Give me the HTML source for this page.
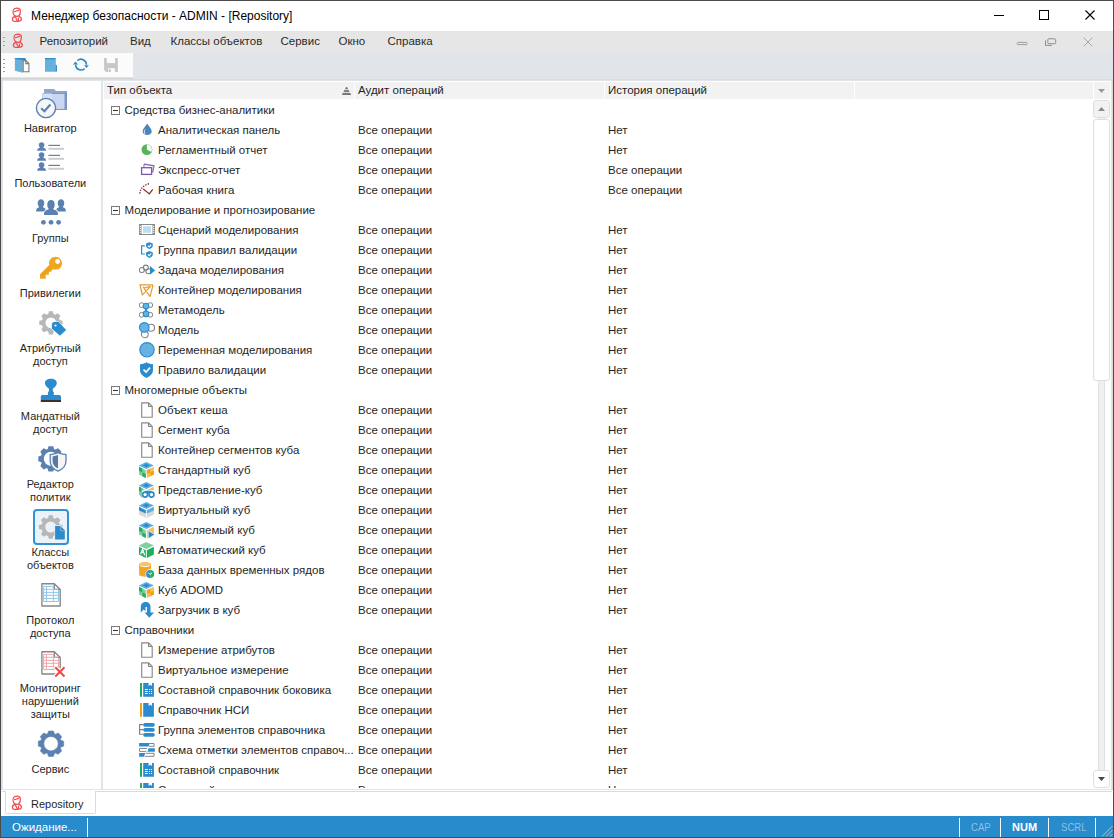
<!DOCTYPE html>
<html><head><meta charset="utf-8"><title>Менеджер безопасности</title><style>
*{margin:0;padding:0;box-sizing:border-box}
html,body{width:1114px;height:838px;overflow:hidden;background:#fff}
body{position:relative;font-family:"Liberation Sans",sans-serif;color:#1f1f1f}
.a{position:absolute;display:block}
.t{position:absolute;white-space:nowrap;line-height:20px;font-size:11.5px}
</style></head><body>
<svg class="a" style="left:8px;top:6px" width="18" height="18" viewBox="0 0 18 18"><g fill="none" stroke="#ef4a4c" stroke-width="1.25" stroke-linejoin="round" stroke-linecap="round"><path d="M5.6 8.5 C4.8 6.5 4.8 3.5 6.5 2.7 C8 2 10.5 2 11.8 3.2 C12.6 4 12.4 6 12 8 C11.6 9.5 10.8 10.2 9.5 10.3 C8 10.4 6.2 9.8 5.6 8.5Z"/><path d="M6.4 5.6 C7.6 5.6 9 4.6 10.6 4.3"/><path d="M6.6 10.6 C4.8 11 4.2 12.5 4.5 14.2 C5 15.2 7 15.4 9 15.4 C11.5 15.3 13.1 15 13.3 13.6 C13.5 11.8 12.5 10.9 11.2 10.6"/><path d="M7.4 11 L9.4 15"/><path d="M10.5 12 V14.6"/></g></svg>
<div class="t" style="left:31px;top:5.84px;font-size:12px;color:#000;">Менеджер безопасности - ADMIN - [Repository]</div>
<div class="a" style="left:994px;top:15px;width:10px;height:1px;background:#000;"></div>
<div class="a" style="left:1039px;top:10px;width:10px;height:10px;border:1px solid #000"></div>
<svg class="a" style="left:1085px;top:10px" width="10" height="10" viewBox="0 0 10 10"><path d="M0.5 0.5 L9.5 9.5 M9.5 0.5 L0.5 9.5" stroke="#000" stroke-width="1.1"/></svg>
<div class="a" style="left:1px;top:31px;width:1112px;height:21px;background:#e6e6e6;"></div>
<div class="a" style="left:3px;top:37px;width:2px;height:1px;background:#a0a0a0;"></div>
<div class="a" style="left:3px;top:41px;width:2px;height:1px;background:#a0a0a0;"></div>
<div class="a" style="left:3px;top:45px;width:2px;height:1px;background:#a0a0a0;"></div>
<svg class="a" style="left:9px;top:32px" width="18" height="18" viewBox="0 0 18 18"><g fill="none" stroke="#ef4a4c" stroke-width="1.25" stroke-linejoin="round" stroke-linecap="round"><path d="M5.6 8.5 C4.8 6.5 4.8 3.5 6.5 2.7 C8 2 10.5 2 11.8 3.2 C12.6 4 12.4 6 12 8 C11.6 9.5 10.8 10.2 9.5 10.3 C8 10.4 6.2 9.8 5.6 8.5Z"/><path d="M6.4 5.6 C7.6 5.6 9 4.6 10.6 4.3"/><path d="M6.6 10.6 C4.8 11 4.2 12.5 4.5 14.2 C5 15.2 7 15.4 9 15.4 C11.5 15.3 13.1 15 13.3 13.6 C13.5 11.8 12.5 10.9 11.2 10.6"/><path d="M7.4 11 L9.4 15"/><path d="M10.5 12 V14.6"/></g></svg>
<div class="t" style="left:39.5px;top:31.02px;font-size:11.5px;color:#2b2b2b;">Репозиторий</div>
<div class="t" style="left:130px;top:31.02px;font-size:11.5px;color:#2b2b2b;">Вид</div>
<div class="t" style="left:170.5px;top:31.02px;font-size:11.5px;color:#2b2b2b;">Классы объектов</div>
<div class="t" style="left:280.5px;top:31.02px;font-size:11.5px;color:#2b2b2b;">Сервис</div>
<div class="t" style="left:338.5px;top:31.02px;font-size:11.5px;color:#2b2b2b;">Окно</div>
<div class="t" style="left:387.5px;top:31.02px;font-size:11.5px;color:#2b2b2b;">Справка</div>
<svg class="a" style="left:1010px;top:34px" width="50" height="16" viewBox="0 0 50 16"><path d="M7.6 8.4 H16.9 M7.6 10.6 H16.9 M7 9.5 L8 8.4 M7 9.5 L8 10.6 M17.5 9.5 L16.5 8.4 M17.5 9.5 L16.5 10.6" stroke="#969696" stroke-width="0.9" fill="none"/><rect x="37.8" y="4.8" width="7.9" height="4.9" rx="1" fill="none" stroke="#8e8e8e" stroke-width="1"/><path d="M35.5 6.3 V11.4 H42" fill="none" stroke="#8e8e8e" stroke-width="1"/></svg>
<svg class="a" style="left:1083px;top:37px" width="10" height="10" viewBox="0 0 10 10"><path d="M0.5 0.5 L9.5 9.5 M9.5 0.5 L0.5 9.5" stroke="#a8a8a8" stroke-width="1"/></svg>
<div class="a" style="left:1px;top:52px;width:1112px;height:27px;background:#e1e4e8;"></div>
<div class="a" style="left:1px;top:53px;width:132px;height:24px;background:#fbfbfb;"></div>
<div class="a" style="left:3px;top:59px;width:2px;height:1px;background:#a0a0a0;"></div>
<div class="a" style="left:3px;top:63px;width:2px;height:1px;background:#a0a0a0;"></div>
<div class="a" style="left:3px;top:67px;width:2px;height:1px;background:#a0a0a0;"></div>
<div class="a" style="left:3px;top:71px;width:2px;height:1px;background:#a0a0a0;"></div>
<svg class="a" style="left:12px;top:55px" width="50" height="22" viewBox="0 0 50 22"><path d="M2.9 2.9 H12.5 Q13.7 2.9 13.7 4 V5.5 H10.8 V17.7 L2.9 15.7Z" fill="#66b1dc"/><path d="M2.9 2.9 H12.5 Q13.7 2.9 13.7 4 V5.3 H10.8 L2.9 4Z" fill="#2f8fd0"/><path d="M11.2 5.6 H14 L16.9 8.5 V16.8 H11.2Z" fill="#fff" stroke="#7a7a7a" stroke-width="1.1"/><path d="M13.8 5.6 V8.6 H16.9" fill="none" stroke="#7a7a7a" stroke-width="1.1"/><path d="M33 2.9 H42.5 Q43.8 2.9 43.8 4.2 V9.8 L45 10.5 V15.5 Q45 16.8 43.8 16.8 H33Z" fill="#66b1dc"/><path d="M33 2.9 H42.5 Q43.8 2.9 43.8 4.2 V4.2 H33Z" fill="#2f8fd0"/><path d="M43.8 9.8 L45 10.5 V15.5 Q45 16.8 43.8 16.8Z" fill="#2f8fd0"/></svg>
<svg class="a" style="left:70px;top:55px" width="50" height="22" viewBox="0 0 50 22"><g fill="none" stroke="#2a8ccf" stroke-width="1.6"><path d="M7.4 5.6 A5.4 5.4 0 0 1 16.4 9.65"/><path d="M5.6 9.65 A5.4 5.4 0 0 0 14.6 13.6"/></g><path d="M2.9 9.6 L8.1 9.6 L5.5 6.6Z M14.1 10.3 L18.9 10.3 L16.5 13Z" fill="#2a8ccf"/><path d="M34.1 2.9 H46.8 Q47.8 2.9 47.8 3.9 V17 H36 L34.1 15.1Z" fill="#c6c7c9"/><rect x="36.8" y="2.9" width="8.3" height="5.2" fill="#fbfbfb"/><rect x="38.2" y="13.2" width="6.7" height="3.8" fill="#fbfbfb"/><rect x="38.8" y="14.2" width="2" height="2.8" fill="#c6c7c9"/></svg>
<div class="a" style="left:1px;top:77px;width:132px;height:1px;background:#e4e4e4;"></div>
<div class="a" style="left:1px;top:78px;width:132px;height:1px;background:#d2d2d2;"></div>
<div class="a" style="left:1px;top:79px;width:1112px;height:1px;background:#dcdcd5;"></div>
<div class="a" style="left:2px;top:80px;width:1110px;height:1px;background:#e1e5e9;"></div>
<div class="a" style="left:1px;top:79px;width:1px;height:711px;background:#dcdcd5;"></div>
<div class="a" style="left:2px;top:80px;width:1px;height:710px;background:#e1e5e9;"></div>
<div class="a" style="left:101px;top:80px;width:2px;height:710px;background:#e1e5e9;"></div>
<div class="a" style="left:1111px;top:80px;width:1px;height:710px;background:#e1e5e9;"></div>
<div class="a" style="left:1112px;top:79px;width:1px;height:711px;background:#dcdcd5;"></div>
<div class="a" style="left:2px;top:789px;width:1110px;height:1px;background:#e1e5e9;"></div>
<svg class="a" style="left:34px;top:86px" width="36" height="36" viewBox="0 0 36 36"><path d="M10 3 H20 L22 5 H33 V24 H10Z" fill="#8fa6cf"/><path d="M9 7.5 H31 V23.5 H9Z" fill="#c8d6f0" stroke="#7e97c4" stroke-width="1"/><path d="M9 7.5 H18 V23.5 H9Z" fill="#d3e3f5"/><path d="M31.5 6 H33 V24 H31.5Z" fill="#7a93c0"/><circle cx="12" cy="22" r="9.6" fill="#f6f6f6" stroke="#5b80b2" stroke-width="1.4"/><path d="M7.2 22.2 L10.4 25.2 L16.4 18.6" fill="none" stroke="#5b80b2" stroke-width="2.2"/></svg>
<div class="t" style="left:-9.700000000000003px;width:120px;text-align:center;top:118.19px;font-size:11px;">Навигатор</div>
<svg class="a" style="left:0px;top:0px" width="100" height="180" viewBox="0 0 100 180"><path d="M41.6 142.2 C38.265 142.2 38.265 146.19039999999998 39.86 147.188 L39.86 147.70399999999998 C37.64 148.22 37.2 149.07999999999998 37.2 150.79999999999998 L46.0 150.79999999999998 C46.0 149.07999999999998 45.56 148.22 43.34 147.70399999999998 L43.34 147.188 C44.935 146.19039999999998 44.935 142.2 41.6 142.2Z" fill="#5b80b2" /><rect x="48.4" y="144.79999999999998" width="11.6" height="1.2" fill="#5b80b2"/><rect x="48.4" y="147.79999999999998" width="15.6" height="2" fill="#cdcdcd"/><path d="M41.6 152.2 C38.265 152.2 38.265 156.19039999999998 39.86 157.188 L39.86 157.70399999999998 C37.64 158.22 37.2 159.07999999999998 37.2 160.79999999999998 L46.0 160.79999999999998 C46.0 159.07999999999998 45.56 158.22 43.34 157.70399999999998 L43.34 157.188 C44.935 156.19039999999998 44.935 152.2 41.6 152.2Z" fill="#5b80b2" /><rect x="48.4" y="154.79999999999998" width="11.6" height="1.2" fill="#5b80b2"/><rect x="48.4" y="157.79999999999998" width="15.6" height="2" fill="#cdcdcd"/><path d="M41.6 162.2 C38.265 162.2 38.265 166.19039999999998 39.86 167.188 L39.86 167.70399999999998 C37.64 168.22 37.2 169.07999999999998 37.2 170.79999999999998 L46.0 170.79999999999998 C46.0 169.07999999999998 45.56 168.22 43.34 167.70399999999998 L43.34 167.188 C44.935 166.19039999999998 44.935 162.2 41.6 162.2Z" fill="#5b80b2" /><rect x="48.4" y="164.79999999999998" width="11.6" height="1.2" fill="#5b80b2"/><rect x="48.4" y="167.79999999999998" width="15.6" height="2" fill="#cdcdcd"/></svg>
<div class="t" style="left:-9.700000000000003px;width:120px;text-align:center;top:173.19px;font-size:11px;">Пользователи</div>
<svg class="a" style="left:0px;top:190px" width="100" height="40" viewBox="0 190 100 40"><path d="M41 199.2 C37.09 199.2 37.09 204.9536 38.96 206.392 L38.96 207.136 C36.59 207.88 36.1 209.12 36.1 211.6 L45.9 211.6 C45.9 209.12 45.41 207.88 43.04 207.136 L43.04 206.392 C44.91 204.9536 44.91 199.2 41 199.2Z" fill="#5b80b2" /><path d="M61 199.2 C57.09 199.2 57.09 204.9536 58.96 206.392 L58.96 207.136 C56.59 207.88 56.1 209.12 56.1 211.6 L65.9 211.6 C65.9 209.12 65.41 207.88 63.04 207.136 L63.04 206.392 C64.91 204.9536 64.91 199.2 61 199.2Z" fill="#5b80b2" /><path d="M51 200.1 C46.515 200.1 46.515 206.9672 48.66 208.684 L48.66 209.572 C44.7 210.45999999999998 44 211.94 44 214.9 L58 214.9 C58 211.94 57.3 210.45999999999998 53.34 209.572 L53.34 208.684 C55.485 206.9672 55.485 200.1 51 200.1Z" fill="#5b80b2" stroke="#fff" stroke-width="2.2" paint-order="stroke"/><circle cx="43.4" cy="222.3" r="2.4" fill="#5b80b2"/><circle cx="51" cy="222.3" r="2.4" fill="#5b80b2"/><circle cx="58.6" cy="222.3" r="2.4" fill="#5b80b2"/></svg>
<div class="t" style="left:-9.700000000000003px;width:120px;text-align:center;top:228.19px;font-size:11px;">Группы</div>
<svg class="a" style="left:0px;top:250px" width="100" height="35" viewBox="0 250 100 35"><path d="M55.5 256.7 C59.1 256.7 62 259.6 62 263.2 C62 266.8 59.1 269.7 55.5 269.7 C54.6 269.7 53.7 269.5 52.9 269.2 L50.5 271.9 H48.9 V274.7 H45.75 V278.8 H40 V274.2 L49.4 264.8 C49.1 264.3 49 263.7 49 263.2 C49 259.6 51.9 256.7 55.5 256.7Z" fill="#f2a520"/><circle cx="57.6" cy="261.5" r="2.4" fill="#fff"/><path d="M42 275.6 L49.6 268" stroke="#b87a10" stroke-width="0.7" stroke-dasharray="0.9 0.7"/></svg>
<div class="t" style="left:-9.700000000000003px;width:120px;text-align:center;top:283.19px;font-size:11px;">Привилегии</div>
<svg class="a" style="left:0px;top:300px" width="100" height="45" viewBox="0 300 100 45"><path d="M48.33 313.96 L48.91 311.17 L52.89 311.17 L53.47 313.96 L55.33 314.74 L57.72 313.17 L60.53 315.98 L58.96 318.37 L59.74 320.23 L62.53 320.81 L62.53 324.79 L59.74 325.37 L58.96 327.23 L60.53 329.62 L57.72 332.43 L55.33 330.86 L53.47 331.64 L52.89 334.43 L48.91 334.43 L48.33 331.64 L46.47 330.86 L44.08 332.43 L41.27 329.62 L42.84 327.23 L42.06 325.37 L39.27 324.79 L39.27 320.81 L42.06 320.23 L42.84 318.37 L41.27 315.98 L44.08 313.17 L46.47 314.74Z M56.30 322.80 A5.4 5.4 0 1 0 45.50 322.80 A5.4 5.4 0 1 0 56.30 322.80Z" fill="#b7b7b7" fill-rule="evenodd"/><path d="M52 323.5 L53.5 322 L58.5 321.8 L66.2 329.9 L59.9 335.8 L51.8 328.5Z" fill="#2a8ccf" stroke="#fff" stroke-width="1.3" paint-order="stroke"/><circle cx="55.5" cy="325.5" r="1.1" fill="#fff"/></svg>
<div class="t" style="left:-9.700000000000003px;width:120px;text-align:center;top:338.19px;font-size:11px;">Атрибутный</div>
<div class="t" style="left:-9.700000000000003px;width:120px;text-align:center;top:351.19px;font-size:11px;">доступ</div>
<svg class="a" style="left:0px;top:370px" width="100" height="40" viewBox="0 370 100 40"><path d="M50.9 378.8 C54.6 378.8 56.8 380.6 56.8 383.2 C56.8 385.6 55 386.8 53.6 388 C52.8 388.7 52.6 389.6 52.8 390.6 C53 391.6 54 392.4 54 393.4 L53.6 395 H59.5 C60.6 395 61 396 61 397 V400 H40.8 V397 C40.8 396 41.2 395 42.3 395 H48.2 L47.8 393.4 C47.8 392.4 48.8 391.6 49 390.6 C49.2 389.6 49 388.7 48.2 388 C46.8 386.8 45 385.6 45 383.2 C45 380.6 47.2 378.8 50.9 378.8Z" fill="#2a8ccf"/><rect x="40.8" y="400" width="20.2" height="2" fill="#3b2f2f"/></svg>
<div class="t" style="left:-9.700000000000003px;width:120px;text-align:center;top:406.19px;font-size:11px;">Мандатный</div>
<div class="t" style="left:-9.700000000000003px;width:120px;text-align:center;top:419.19px;font-size:11px;">доступ</div>
<svg class="a" style="left:0px;top:440px" width="100" height="40" viewBox="0 440 100 40"><path d="M47.56 449.16 L48.51 446.22 L53.29 446.22 L54.24 449.16 L55.36 449.62 L58.11 448.22 L61.48 451.59 L60.08 454.34 L60.54 455.46 L63.48 456.41 L63.48 461.19 L60.54 462.14 L60.08 463.26 L61.48 466.01 L58.11 469.38 L55.36 467.98 L54.24 468.44 L53.29 471.38 L48.51 471.38 L47.56 468.44 L46.44 467.98 L43.69 469.38 L40.32 466.01 L41.72 463.26 L41.26 462.14 L38.32 461.19 L38.32 456.41 L41.26 455.46 L41.72 454.34 L40.32 451.59 L43.69 448.22 L46.44 449.62Z M58.00 458.80 A7.1 7.1 0 1 0 43.80 458.80 A7.1 7.1 0 1 0 58.00 458.80Z" fill="#5b80b2" fill-rule="evenodd"/><path d="M50.2 454.6 C53.5 454.3 55.8 453.6 58 452.6 C60.2 453.6 62.6 454.3 66 454.6 V461 C66 465.8 62.8 469.2 58 471.2 C53.2 469.2 50.2 465.8 50.2 461Z" fill="#f4f4f4" stroke="#5b80b2" stroke-width="1.3"/><path d="M52.6 456.4 C54.5 456.2 56.4 455.6 58 455 V468.6 C54.8 467 52.6 464.6 52.6 461Z" fill="#5a78a0"/></svg>
<div class="t" style="left:-9.700000000000003px;width:120px;text-align:center;top:474.19px;font-size:11px;">Редактор</div>
<div class="t" style="left:-9.700000000000003px;width:120px;text-align:center;top:487.19px;font-size:11px;">политик</div>
<div class="a" style="left:33px;top:509px;width:36px;height:36px;border:2px solid #3592d2;border-radius:4px;background:#eaf2fa"></div>
<svg class="a" style="left:0px;top:505px" width="100" height="45" viewBox="0 505 100 45"><path d="M48.13 518.06 L48.71 515.17 L52.69 515.17 L53.27 518.06 L55.21 518.86 L57.66 517.22 L60.48 520.04 L58.84 522.49 L59.64 524.43 L62.53 525.01 L62.53 528.99 L59.64 529.57 L58.84 531.51 L60.48 533.96 L57.66 536.78 L55.21 535.14 L53.27 535.94 L52.69 538.83 L48.71 538.83 L48.13 535.94 L46.19 535.14 L43.74 536.78 L40.92 533.96 L42.56 531.51 L41.76 529.57 L38.87 528.99 L38.87 525.01 L41.76 524.43 L42.56 522.49 L40.92 520.04 L43.74 517.22 L46.19 518.86Z M56.20 527.00 A5.5 5.5 0 1 0 45.20 527.00 A5.5 5.5 0 1 0 56.20 527.00Z" fill="#b7b7b7" fill-rule="evenodd"/><path d="M55.1 525.9 H60.4 L64.8 530.2 V539.6 H55.1Z" fill="#2a8ccf" stroke="#eaf2fa" stroke-width="1.4" paint-order="stroke"/><path d="M60.4 526.2 V530.8 H64.8" fill="none" stroke="#8fb4d4" stroke-width="0.8"/></svg>
<div class="t" style="left:-9.700000000000003px;width:120px;text-align:center;top:542.19px;font-size:11px;">Классы</div>
<div class="t" style="left:-9.700000000000003px;width:120px;text-align:center;top:555.19px;font-size:11px;">объектов</div>
<svg class="a" style="left:0px;top:578px" width="100" height="32" viewBox="0 578 100 32"><path d="M41.9 583.7 H54.3 L60.2 589.6 V606 H41.9Z" fill="#fff" stroke="#868686" stroke-width="1.35" stroke-linejoin="round"/><path d="M54.3 583.7 V589.4 H60.2" fill="none" stroke="#868686" stroke-width="1.35"/><g fill="none" stroke="#8cc8ec" stroke-width="1"><path d="M43.6 586.4 H53.6 M43.6 586.4 V601.5 H58.5 V590.2 M46.5 586.4 V601.5 M53.4 586.4 V601.5"/><path d="M43.6 589.3 H58.5"/><path d="M43.6 592.4 H58.5"/><path d="M43.6 595.3 H58.5"/><path d="M43.6 598.4 H58.5"/></g></svg>
<div class="t" style="left:-9.700000000000003px;width:120px;text-align:center;top:610.19px;font-size:11px;">Протокол</div>
<div class="t" style="left:-9.700000000000003px;width:120px;text-align:center;top:623.19px;font-size:11px;">доступа</div>
<svg class="a" style="left:0px;top:646px" width="100" height="34" viewBox="0 646 100 34"><path d="M41.9 651.7 H54.3 L60.2 657.6 V674 H41.9Z" fill="#fff" stroke="#868686" stroke-width="1.35" stroke-linejoin="round"/><path d="M54.3 651.7 V657.4 H60.2" fill="none" stroke="#868686" stroke-width="1.35"/><g fill="none" stroke="#f2a8a8" stroke-width="1"><path d="M43.6 654.4 H53.6 M43.6 654.4 V669.5 H58.5 V658.2 M46.5 654.4 V669.5 M53.4 654.4 V669.5"/><path d="M43.6 657.3 H58.5"/><path d="M43.6 660.4 H58.5"/><path d="M43.6 663.3 H58.5"/><path d="M43.6 666.4 H58.5"/></g><path d="M54.5 666.5 L65.3 677.3 M65.3 666.5 L54.5 677.3" stroke="#fff" stroke-width="4.2"/><path d="M55.3 667.3 L64.5 676.5 M64.5 667.3 L55.3 676.5" stroke="#ef4545" stroke-width="2"/></svg>
<div class="t" style="left:-9.700000000000003px;width:120px;text-align:center;top:678.19px;font-size:11px;">Мониторинг</div>
<div class="t" style="left:-9.700000000000003px;width:120px;text-align:center;top:691.19px;font-size:11px;">нарушений</div>
<div class="t" style="left:-9.700000000000003px;width:120px;text-align:center;top:704.19px;font-size:11px;">защиты</div>
<svg class="a" style="left:0px;top:725px" width="100" height="40" viewBox="0 725 100 40"><path d="M47.47 733.92 L48.61 731.02 L53.39 731.02 L54.53 733.92 L55.42 734.29 L58.28 733.05 L61.65 736.42 L60.41 739.28 L60.78 740.17 L63.68 741.31 L63.68 746.09 L60.78 747.23 L60.41 748.12 L61.65 750.98 L58.28 754.35 L55.42 753.11 L54.53 753.48 L53.39 756.38 L48.61 756.38 L47.47 753.48 L46.58 753.11 L43.72 754.35 L40.35 750.98 L41.59 748.12 L41.22 747.23 L38.32 746.09 L38.32 741.31 L41.22 740.17 L41.59 739.28 L40.35 736.42 L43.72 733.05 L46.58 734.29Z M58.20 743.70 A7.2 7.2 0 1 0 43.80 743.70 A7.2 7.2 0 1 0 58.20 743.70Z" fill="#5b80b2" fill-rule="evenodd" stroke="#5b80b2" stroke-width="0.6" stroke-linejoin="round"/></svg>
<div class="t" style="left:-9.700000000000003px;width:120px;text-align:center;top:759.19px;font-size:11px;">Сервис</div>
<div class="a" style="left:103px;top:81px;width:1008px;height:1px;background:#ffffff;"></div>
<div class="a" style="left:104px;top:82px;width:250px;height:17px;background:#f2f2f2;"></div>
<div class="a" style="left:355px;top:82px;width:249px;height:17px;background:#f2f2f2;"></div>
<div class="a" style="left:605px;top:82px;width:249px;height:17px;background:#f2f2f2;"></div>
<div class="a" style="left:855px;top:82px;width:238px;height:17px;background:#f2f2f2;"></div>
<div class="a" style="left:1094px;top:82px;width:16px;height:17px;background:#f2f2f2;"></div>
<div class="t" style="left:107px;top:80.02px;font-size:11.5px;">Тип объекта</div>
<div class="t" style="left:358px;top:80.02px;font-size:11.5px;">Аудит операций</div>
<div class="t" style="left:608px;top:80.02px;font-size:11.5px;">История операций</div>
<svg class="a" style="left:342px;top:87px" width="9" height="8" viewBox="0 0 9 8"><path d="M4.5 -0.9 L9.2 8 H-0.2Z" fill="#787878"/><rect x="0" y="2.2" width="9" height="0.8" fill="#f2f2f2"/><rect x="0" y="4.9" width="9" height="0.9" fill="#f2f2f2"/></svg>
<svg class="a" style="left:1098px;top:89px" width="7" height="4" viewBox="0 0 7 4"><path d="M0 0 H7 L3.5 4Z" fill="#9a9a9a"/></svg>
<div class="a" style="left:103px;top:99px;width:990px;height:689px;overflow:hidden">
<svg class="a" style="left:8px;top:7px" width="9" height="9" viewBox="0 0 9 9"><rect x="0.5" y="0.5" width="8" height="8" fill="#fff" stroke="#7a7a7a" stroke-width="1"/><rect x="2" y="4" width="5" height="1" fill="#333"/></svg>
<div class="t" style="left:21.5px;top:1.02px;font-size:11.5px;">Средства бизнес-аналитики</div>
<svg class="a" style="left:36px;top:23px" width="18" height="18" viewBox="0 0 18 18"><path d="M8.2 1.6 C9.2 3.6 12.7 6.6 12.7 9.6 C12.7 11.6 10.8 13 8.2 13 C5.6 13 3.7 11.6 3.7 9.6 C3.7 6.6 7.2 3.6 8.2 1.6Z" fill="#4d84bb"/><path d="M6.6 6.8 C5.3 8.6 5.2 10.6 6.9 12.4 C5.6 12 4.8 10.9 4.9 9.6 C5 8.4 5.7 7.6 6.6 6.8Z" fill="#fff"/></svg>
<div class="t" style="left:55px;top:21.02px;font-size:11.5px;">Аналитическая панель</div>
<div class="t" style="left:255px;top:21.02px;font-size:11.5px;">Все операции</div>
<div class="t" style="left:505px;top:21.02px;font-size:11.5px;">Нет</div>
<svg class="a" style="left:36px;top:43px" width="18" height="18" viewBox="0 0 18 18"><circle cx="7.9" cy="7.6" r="5.4" fill="#58b45a"/><path d="M7.9 7.6 V2.6 A5 5 0 0 1 12.2 10.1Z" fill="#fff"/></svg>
<div class="t" style="left:55px;top:41.02px;font-size:11.5px;">Регламентный отчет</div>
<div class="t" style="left:255px;top:41.02px;font-size:11.5px;">Все операции</div>
<div class="t" style="left:505px;top:41.02px;font-size:11.5px;">Нет</div>
<svg class="a" style="left:36px;top:63px" width="18" height="18" viewBox="0 0 18 18"><path d="M5 2.2 L15 3.8 L13.6 10.5" fill="none" stroke="#8460b0" stroke-width="1.2"/><path d="M5 2.2 V5" stroke="#8460b0" stroke-width="1"/><rect x="2.6" y="5.7" width="10" height="6.7" fill="#fff" stroke="#7d55aa" stroke-width="1.3"/></svg>
<div class="t" style="left:55px;top:61.02px;font-size:11.5px;">Экспресс-отчет</div>
<div class="t" style="left:255px;top:61.02px;font-size:11.5px;">Все операции</div>
<div class="t" style="left:505px;top:61.02px;font-size:11.5px;">Все операции</div>
<svg class="a" style="left:36px;top:83px" width="18" height="18" viewBox="0 0 18 18"><path d="M0.8 11.6 C1 7 5 2.5 10.8 1.6" fill="none" stroke="#8b2c2c" stroke-width="1.3" stroke-dasharray="1.4 1.2"/><path d="M4.2 7.1 L10.4 11.9 L13.7 7.3" fill="none" stroke="#8b2c2c" stroke-width="1.3"/></svg>
<div class="t" style="left:55px;top:81.02px;font-size:11.5px;">Рабочая книга</div>
<div class="t" style="left:255px;top:81.02px;font-size:11.5px;">Все операции</div>
<div class="t" style="left:505px;top:81.02px;font-size:11.5px;">Все операции</div>
<svg class="a" style="left:8px;top:107px" width="9" height="9" viewBox="0 0 9 9"><rect x="0.5" y="0.5" width="8" height="8" fill="#fff" stroke="#7a7a7a" stroke-width="1"/><rect x="2" y="4" width="5" height="1" fill="#333"/></svg>
<div class="t" style="left:21.5px;top:101.02px;font-size:11.5px;">Моделирование и прогнозирование</div>
<svg class="a" style="left:36px;top:123px" width="18" height="18" viewBox="0 0 18 18"><rect x="0" y="2" width="16" height="11" fill="#8a8a8a"/><rect x="2.5" y="3" width="11" height="9" fill="#fff"/><rect x="4" y="4.3" width="8" height="6.5" fill="#bcdcf0"/><rect x="0.8" y="3.8" width="1.1" height="1.1" fill="#fff"/><rect x="14.1" y="3.8" width="1.1" height="1.1" fill="#fff"/><rect x="0.8" y="5.8" width="1.1" height="1.1" fill="#fff"/><rect x="14.1" y="5.8" width="1.1" height="1.1" fill="#fff"/><rect x="0.8" y="7.8" width="1.1" height="1.1" fill="#fff"/><rect x="14.1" y="7.8" width="1.1" height="1.1" fill="#fff"/><rect x="0.8" y="9.8" width="1.1" height="1.1" fill="#fff"/><rect x="14.1" y="9.8" width="1.1" height="1.1" fill="#fff"/></svg>
<div class="t" style="left:55px;top:121.02px;font-size:11.5px;">Сценарий моделирования</div>
<div class="t" style="left:255px;top:121.02px;font-size:11.5px;">Все операции</div>
<div class="t" style="left:505px;top:121.02px;font-size:11.5px;">Нет</div>
<svg class="a" style="left:36px;top:143px" width="18" height="18" viewBox="0 0 18 18"><path d="M5.8 3.9 H2.6 V12 H5.8" fill="none" stroke="#2a8ccf" stroke-width="1.2"/><path d="M10.4 0.3 L13.8 1.6 V3.6999999999999997 C13.8 5.3 12.2 6.3999999999999995 10.4 7.1 C8.6 6.3999999999999995 7 5.3 7 3.6999999999999997 V1.6Z" fill="#2a8ccf"/><path d="M8.8 3.5999999999999996 L10.2 4.8999999999999995 L12.2 2.5999999999999996" fill="none" stroke="#fff" stroke-width="1.1"/><path d="M10.4 9.1 L13.8 10.4 V12.5 C13.8 14.1 12.2 15.2 10.4 15.899999999999999 C8.6 15.2 7 14.1 7 12.5 V10.4Z" fill="#2a8ccf"/><path d="M8.8 12.399999999999999 L10.2 13.7 L12.2 11.399999999999999" fill="none" stroke="#fff" stroke-width="1.1"/></svg>
<div class="t" style="left:55px;top:141.02px;font-size:11.5px;">Группа правил валидации</div>
<div class="t" style="left:255px;top:141.02px;font-size:11.5px;">Все операции</div>
<div class="t" style="left:505px;top:141.02px;font-size:11.5px;">Нет</div>
<svg class="a" style="left:36px;top:163px" width="18" height="18" viewBox="0 0 18 18"><g fill="none" stroke="#808080" stroke-width="1.1"><circle cx="2.9" cy="8" r="2.5"/><circle cx="6.8" cy="5.6" r="2.5"/><circle cx="9.4" cy="9.2" r="2.5"/></g><path d="M11 4 L16.1 8.4 L11 12.8Z" fill="#2a8ccf"/></svg>
<div class="t" style="left:55px;top:161.02px;font-size:11.5px;">Задача моделирования</div>
<div class="t" style="left:255px;top:161.02px;font-size:11.5px;">Все операции</div>
<div class="t" style="left:505px;top:161.02px;font-size:11.5px;">Нет</div>
<svg class="a" style="left:36px;top:183px" width="18" height="18" viewBox="0 0 18 18"><g fill="none" stroke="#e39a32" stroke-width="1.2" stroke-linejoin="round"><path d="M0.4 2.9 H14 M1 3 L3.5 13.5 M14 3 L11 14.6 M11.6 4.3 L3.6 12.6 M4.2 4.8 L11 14.6 M5 6 L11.5 4.4"/></g></svg>
<div class="t" style="left:55px;top:181.02px;font-size:11.5px;">Контейнер моделирования</div>
<div class="t" style="left:255px;top:181.02px;font-size:11.5px;">Все операции</div>
<div class="t" style="left:505px;top:181.02px;font-size:11.5px;">Нет</div>
<svg class="a" style="left:36px;top:203px" width="18" height="18" viewBox="0 0 18 18"><g fill="none" stroke="#808080" stroke-width="1"><circle cx="2.6" cy="3.1" r="2.4"/><circle cx="11.3" cy="3.1" r="2.4"/><circle cx="2.6" cy="12.8" r="2.4"/><circle cx="11.3" cy="12.8" r="2.4"/></g><rect x="6" y="4" width="2" height="8" fill="#2a8ccf"/><circle cx="7" cy="4" r="2.8" fill="#66b2e0" stroke="#2a8ccf" stroke-width="1.1"/><circle cx="7" cy="11.8" r="2.8" fill="#66b2e0" stroke="#2a8ccf" stroke-width="1.1"/></svg>
<div class="t" style="left:55px;top:201.02px;font-size:11.5px;">Метамодель</div>
<div class="t" style="left:255px;top:201.02px;font-size:11.5px;">Все операции</div>
<div class="t" style="left:505px;top:201.02px;font-size:11.5px;">Нет</div>
<svg class="a" style="left:36px;top:223px" width="18" height="18" viewBox="0 0 18 18"><g fill="none" stroke="#808080" stroke-width="1.1"><circle cx="12" cy="5.8" r="3.5"/><circle cx="5.8" cy="12.3" r="3.4"/></g><circle cx="5.3" cy="5.4" r="4.8" fill="#66b2e0" stroke="#2a8ccf" stroke-width="1.1"/></svg>
<div class="t" style="left:55px;top:221.02px;font-size:11.5px;">Модель</div>
<div class="t" style="left:255px;top:221.02px;font-size:11.5px;">Все операции</div>
<div class="t" style="left:505px;top:221.02px;font-size:11.5px;">Нет</div>
<svg class="a" style="left:36px;top:243px" width="18" height="18" viewBox="0 0 18 18"><circle cx="8" cy="7.8" r="7.2" fill="#66b2e0" stroke="#2a8ccf" stroke-width="1.1"/></svg>
<div class="t" style="left:55px;top:241.02px;font-size:11.5px;">Переменная моделирования</div>
<div class="t" style="left:255px;top:241.02px;font-size:11.5px;">Все операции</div>
<div class="t" style="left:505px;top:241.02px;font-size:11.5px;">Нет</div>
<svg class="a" style="left:36px;top:263px" width="18" height="18" viewBox="0 0 18 18"><path d="M7.5 0.3 C8.8 1.3 11 2 14 2.2 V8 C14 11.8 11 14.4 7.5 15.9 C4 14.4 1 11.8 1 8 V2.2 C4 2 6.2 1.3 7.5 0.3Z" fill="#2a8ccf"/><path d="M4.5 7.6 L7.1 10.1 L11 5.6" fill="none" stroke="#fff" stroke-width="1.7"/></svg>
<div class="t" style="left:55px;top:261.02px;font-size:11.5px;">Правило валидации</div>
<div class="t" style="left:255px;top:261.02px;font-size:11.5px;">Все операции</div>
<div class="t" style="left:505px;top:261.02px;font-size:11.5px;">Нет</div>
<svg class="a" style="left:8px;top:287px" width="9" height="9" viewBox="0 0 9 9"><rect x="0.5" y="0.5" width="8" height="8" fill="#fff" stroke="#7a7a7a" stroke-width="1"/><rect x="2" y="4" width="5" height="1" fill="#333"/></svg>
<div class="t" style="left:21.5px;top:281.02px;font-size:11.5px;">Многомерные объекты</div>
<svg class="a" style="left:36px;top:303px" width="18" height="18" viewBox="0 0 18 18"><path d="M2.7 0.9 H9.6 L13.2 4.5 V15.2 H2.7Z" fill="#fff" stroke="#878787" stroke-width="1.15" stroke-linejoin="round"/><path d="M9.6 0.9 V4.5 H13.2" fill="none" stroke="#878787" stroke-width="1.15"/></svg>
<div class="t" style="left:55px;top:301.02px;font-size:11.5px;">Объект кеша</div>
<div class="t" style="left:255px;top:301.02px;font-size:11.5px;">Все операции</div>
<div class="t" style="left:505px;top:301.02px;font-size:11.5px;">Нет</div>
<svg class="a" style="left:36px;top:323px" width="18" height="18" viewBox="0 0 18 18"><path d="M2.7 0.9 H9.6 L13.2 4.5 V15.2 H2.7Z" fill="#fff" stroke="#878787" stroke-width="1.15" stroke-linejoin="round"/><path d="M9.6 0.9 V4.5 H13.2" fill="none" stroke="#878787" stroke-width="1.15"/></svg>
<div class="t" style="left:55px;top:321.02px;font-size:11.5px;">Сегмент куба</div>
<div class="t" style="left:255px;top:321.02px;font-size:11.5px;">Все операции</div>
<div class="t" style="left:505px;top:321.02px;font-size:11.5px;">Нет</div>
<svg class="a" style="left:36px;top:343px" width="18" height="18" viewBox="0 0 18 18"><path d="M2.7 0.9 H9.6 L13.2 4.5 V15.2 H2.7Z" fill="#fff" stroke="#878787" stroke-width="1.15" stroke-linejoin="round"/><path d="M9.6 0.9 V4.5 H13.2" fill="none" stroke="#878787" stroke-width="1.15"/></svg>
<div class="t" style="left:55px;top:341.02px;font-size:11.5px;">Контейнер сегментов куба</div>
<div class="t" style="left:255px;top:341.02px;font-size:11.5px;">Все операции</div>
<div class="t" style="left:505px;top:341.02px;font-size:11.5px;">Нет</div>
<svg class="a" style="left:36px;top:363px" width="18" height="18" viewBox="0 0 18 18"><path d="M7.3 0 L14.8 3.6 L7.3 7.1 L-0.2 3.6Z" fill="#5aaee0"/><path d="M7.3 1.6 L10.7 3.4 L7.3 5.2 L3.9 3.4Z" fill="#2a8ccf"/><path d="M0 4.8 L6.8 8.2 V16 L0 12.6Z" fill="#7fd0a0"/><path d="M7.8 8.2 L14.9 4.8 V12.6 L7.8 16Z" fill="#f6bd5c"/><path d="M0 4.8 L3.4 6.5 V10.4 L0 8.7Z M3.4 10.4 L6.8 12.1 V16 L3.4 14.3Z" fill="#1eb05a"/><path d="M7.8 8.2 L11.3 6.5 V10.4 L7.8 12.1Z M11.3 10.4 L14.9 8.7 V12.6 L11.3 14.3Z" fill="#f2a20f"/></svg>
<div class="t" style="left:55px;top:361.02px;font-size:11.5px;">Стандартный куб</div>
<div class="t" style="left:255px;top:361.02px;font-size:11.5px;">Все операции</div>
<div class="t" style="left:505px;top:361.02px;font-size:11.5px;">Нет</div>
<svg class="a" style="left:36px;top:383px" width="18" height="18" viewBox="0 0 18 18"><path d="M7.3 0 L14.8 3.6 L7.3 7.1 L-0.2 3.6Z" fill="#5aaee0"/><path d="M7.3 1.6 L10.7 3.4 L7.3 5.2 L3.9 3.4Z" fill="#2a8ccf"/><path d="M0 4.8 L6.8 8.2 V16 L0 12.6Z" fill="#7fd0a0"/><path d="M7.8 8.2 L14.9 4.8 V12.6 L7.8 16Z" fill="#f6bd5c"/><path d="M0 4.8 L3.4 6.5 V10.4 L0 8.7Z" fill="#1eb05a"/><path d="M3 8.2 H16 V17 H3Z" fill="#fff"/><g fill="none" stroke="#2a8ccf" stroke-width="1.7"><circle cx="6.1" cy="12.6" r="2.5"/><circle cx="12.5" cy="12.6" r="2.5"/></g><path d="M4.2 10.6 L7.2 8.8 H11.4 L14.4 10.6 L13.4 11 H5.2Z" fill="#2a8ccf"/><path d="M0 4.8 L3 6.3 V16 L0 12.6Z" fill="#7fd0a0"/><path d="M0 4.8 L2.4 6 V10 L0 8.7Z" fill="#1eb05a"/></svg>
<div class="t" style="left:55px;top:381.02px;font-size:11.5px;">Представление-куб</div>
<div class="t" style="left:255px;top:381.02px;font-size:11.5px;">Все операции</div>
<div class="t" style="left:505px;top:381.02px;font-size:11.5px;">Нет</div>
<svg class="a" style="left:36px;top:403px" width="18" height="18" viewBox="0 0 18 18"><path d="M7.3 0 L14.8 3.6 L7.3 7.1 L-0.2 3.6Z" fill="#5aaee0"/><path d="M7.3 1.6 L10.7 3.4 L7.3 5.2 L3.9 3.4Z" fill="#2a8ccf"/><path d="M0 4.8 L6.8 8.2 V16 L0 12.6Z" fill="#d9d9d9"/><path d="M7.8 8.2 L14.9 4.8 V12.6 L7.8 16Z" fill="#d9d9d9"/><path d="M0 4.8 L6.8 8.2 V11.6 L0 8.4Z" fill="#2a8ccf"/><path d="M7.8 8.2 L14.9 4.8 V8.4 L7.8 11.6Z" fill="#5aaee0"/></svg>
<div class="t" style="left:55px;top:401.02px;font-size:11.5px;">Виртуальный куб</div>
<div class="t" style="left:255px;top:401.02px;font-size:11.5px;">Все операции</div>
<div class="t" style="left:505px;top:401.02px;font-size:11.5px;">Нет</div>
<svg class="a" style="left:36px;top:423px" width="18" height="18" viewBox="0 0 18 18"><path d="M7.3 0 L14.8 3.6 L7.3 7.1 L-0.2 3.6Z" fill="#5aaee0"/><path d="M7.3 1.6 L10.7 3.4 L7.3 5.2 L3.9 3.4Z" fill="#2a8ccf"/><path d="M0 4.8 L6.8 8.2 V16 L0 12.6Z" fill="#7fd0a0"/><path d="M7.8 8.2 L14.9 4.8 V12.6 L7.8 16Z" fill="#f6bd5c"/><path d="M0 4.8 L3.4 6.5 V10.4 L0 8.7Z M3.4 10.4 L6.8 12.1 V16 L3.4 14.3Z" fill="#1eb05a"/><path d="M9.2 8.4 L15.9 12.6 L9.2 16.8Z" fill="#2a8ccf" stroke="#fff" stroke-width="0.7"/></svg>
<div class="t" style="left:55px;top:421.02px;font-size:11.5px;">Вычисляемый куб</div>
<div class="t" style="left:255px;top:421.02px;font-size:11.5px;">Все операции</div>
<div class="t" style="left:505px;top:421.02px;font-size:11.5px;">Нет</div>
<svg class="a" style="left:36px;top:443px" width="18" height="18" viewBox="0 0 18 18"><path d="M7.3 0 L14.8 3.6 L7.3 7.1 L-0.2 3.6Z" fill="#80d0a2"/><path d="M0 4.8 L6.8 8.2 V16 L0 12.6Z" fill="#1eb05a"/><path d="M7.8 8.2 L14.9 4.8 V12.6 L7.8 16Z" fill="#1eb05a"/><path d="M1.6 12.2 L3.6 6.8 L5.6 13.4 M2.4 10.4 H4.8" fill="none" stroke="#fff" stroke-width="1.2"/></svg>
<div class="t" style="left:55px;top:441.02px;font-size:11.5px;">Автоматический куб</div>
<div class="t" style="left:255px;top:441.02px;font-size:11.5px;">Все операции</div>
<div class="t" style="left:505px;top:441.02px;font-size:11.5px;">Нет</div>
<svg class="a" style="left:36px;top:463px" width="18" height="18" viewBox="0 0 18 18"><path d="M0.1 2.4 C0.1 -0.3 12 -0.3 12 2.4 V12.6 C12 15.4 0.1 15.4 0.1 12.6Z" fill="#f2a628"/><ellipse cx="6" cy="2.5" rx="5.9" ry="2.4" fill="#f7c266"/><path d="M1.4 3.6 C3 5 9 5 10.6 3.6" fill="none" stroke="#fff" stroke-width="0.9"/><circle cx="11.1" cy="11.9" r="4.6" fill="#fff"/><path d="M11.1 7.9 A4 4 0 0 0 11.1 15.9Z" fill="#2a8ccf"/><path d="M11.1 7.9 A4 4 0 0 1 11.1 15.9Z" fill="#1eb05a"/><path d="M9.3 10.6 L11.1 12.5 L13 10.8" fill="none" stroke="#fff" stroke-width="1"/></svg>
<div class="t" style="left:55px;top:461.02px;font-size:11.5px;">База данных временных рядов</div>
<div class="t" style="left:255px;top:461.02px;font-size:11.5px;">Все операции</div>
<div class="t" style="left:505px;top:461.02px;font-size:11.5px;">Нет</div>
<svg class="a" style="left:36px;top:483px" width="18" height="18" viewBox="0 0 18 18"><path d="M7.3 0 L14.8 3.6 L7.3 7.1 L-0.2 3.6Z" fill="#5aaee0"/><path d="M7.3 1.6 L10.7 3.4 L7.3 5.2 L3.9 3.4Z" fill="#2a8ccf"/><path d="M0 4.8 L6.8 8.2 V16 L0 12.6Z" fill="#7fd0a0"/><path d="M7.8 8.2 L14.9 4.8 V12.6 L7.8 16Z" fill="#f6bd5c"/><path d="M0 4.8 L3.4 6.5 V10.4 L0 8.7Z M3.4 10.4 L6.8 12.1 V16 L3.4 14.3Z" fill="#1eb05a"/><path d="M7.8 8.2 L11.3 6.5 V10.4 L7.8 12.1Z M11.3 10.4 L14.9 8.7 V12.6 L11.3 14.3Z" fill="#f2a20f"/></svg>
<div class="t" style="left:55px;top:481.02px;font-size:11.5px;">Куб ADOMD</div>
<div class="t" style="left:255px;top:481.02px;font-size:11.5px;">Все операции</div>
<div class="t" style="left:505px;top:481.02px;font-size:11.5px;">Нет</div>
<svg class="a" style="left:36px;top:503px" width="18" height="18" viewBox="0 0 18 18"><path d="M1.8 10.8 V5 C1.8 1.5 4 0 6.7 0 C9.4 0 11.5 1.5 11.5 5 V10.6 H15.1 L10.3 15.7 L5.5 10.6 H8 V5 H6.5 V9 L4.5 7.6 Z" fill="#2a8ccf"/></svg>
<div class="t" style="left:55px;top:501.02px;font-size:11.5px;">Загрузчик в куб</div>
<div class="t" style="left:255px;top:501.02px;font-size:11.5px;">Все операции</div>
<div class="t" style="left:505px;top:501.02px;font-size:11.5px;">Нет</div>
<svg class="a" style="left:8px;top:527px" width="9" height="9" viewBox="0 0 9 9"><rect x="0.5" y="0.5" width="8" height="8" fill="#fff" stroke="#7a7a7a" stroke-width="1"/><rect x="2" y="4" width="5" height="1" fill="#333"/></svg>
<div class="t" style="left:21.5px;top:521.02px;font-size:11.5px;">Справочники</div>
<svg class="a" style="left:36px;top:543px" width="18" height="18" viewBox="0 0 18 18"><path d="M2.7 0.9 H9.6 L13.2 4.5 V15.2 H2.7Z" fill="#fff" stroke="#878787" stroke-width="1.15" stroke-linejoin="round"/><path d="M9.6 0.9 V4.5 H13.2" fill="none" stroke="#878787" stroke-width="1.15"/></svg>
<div class="t" style="left:55px;top:541.02px;font-size:11.5px;">Измерение атрибутов</div>
<div class="t" style="left:255px;top:541.02px;font-size:11.5px;">Все операции</div>
<div class="t" style="left:505px;top:541.02px;font-size:11.5px;">Нет</div>
<svg class="a" style="left:36px;top:563px" width="18" height="18" viewBox="0 0 18 18"><path d="M2.7 0.9 H9.6 L13.2 4.5 V15.2 H2.7Z" fill="#fff" stroke="#878787" stroke-width="1.15" stroke-linejoin="round"/><path d="M9.6 0.9 V4.5 H13.2" fill="none" stroke="#878787" stroke-width="1.15"/></svg>
<div class="t" style="left:55px;top:561.02px;font-size:11.5px;">Виртуальное измерение</div>
<div class="t" style="left:255px;top:561.02px;font-size:11.5px;">Все операции</div>
<div class="t" style="left:505px;top:561.02px;font-size:11.5px;">Нет</div>
<svg class="a" style="left:36px;top:583px" width="18" height="18" viewBox="0 0 18 18"><rect x="1" y="1" width="2" height="13.8" fill="#1eb05a"/><path d="M4.2 1 H9.6 V4 L11.3 2.8 L13 4 V1 H14.9 V14.8 H4.2Z" fill="#2a8ccf"/><rect x="6" y="7" width="2.7" height="1" fill="#fff"/><rect x="10.1" y="7" width="1" height="1" fill="#fff"/><rect x="12" y="7" width="1" height="1" fill="#fff"/><rect x="6" y="9" width="2.7" height="1" fill="#fff"/><rect x="10.1" y="9" width="1" height="1" fill="#fff"/><rect x="12" y="9" width="1" height="1" fill="#fff"/><rect x="6" y="11" width="2.7" height="1" fill="#fff"/><rect x="10.1" y="11" width="1" height="1" fill="#fff"/><rect x="12" y="11" width="1" height="1" fill="#fff"/></svg>
<div class="t" style="left:55px;top:581.02px;font-size:11.5px;">Составной справочник боковика</div>
<div class="t" style="left:255px;top:581.02px;font-size:11.5px;">Все операции</div>
<div class="t" style="left:505px;top:581.02px;font-size:11.5px;">Нет</div>
<svg class="a" style="left:36px;top:603px" width="18" height="18" viewBox="0 0 18 18"><rect x="1" y="1" width="2" height="13.8" fill="#f2a20f"/><path d="M4.2 1 H9.6 V4 L11.3 2.8 L13 4 V1 H14.9 V14.8 H4.2Z" fill="#2a8ccf"/></svg>
<div class="t" style="left:55px;top:601.02px;font-size:11.5px;">Справочник НСИ</div>
<div class="t" style="left:255px;top:601.02px;font-size:11.5px;">Все операции</div>
<div class="t" style="left:505px;top:601.02px;font-size:11.5px;">Нет</div>
<svg class="a" style="left:36px;top:623px" width="18" height="18" viewBox="0 0 18 18"><path d="M4.5 2.6 H0.6 V12.3 H4.5 M0.6 7.6 H4.5" fill="none" stroke="#808080" stroke-width="1.1"/><rect x="4.2" y="1.1" width="11.6" height="3.6" rx="1.8" fill="#2a8ccf"/><rect x="4.2" y="6.1" width="11.6" height="3.6" rx="1.8" fill="#2a8ccf"/><rect x="4.2" y="11.1" width="11.6" height="3.6" rx="1.8" fill="#2a8ccf"/></svg>
<div class="t" style="left:55px;top:621.02px;font-size:11.5px;">Группа элементов справочника</div>
<div class="t" style="left:255px;top:621.02px;font-size:11.5px;">Все операции</div>
<div class="t" style="left:505px;top:621.02px;font-size:11.5px;">Нет</div>
<svg class="a" style="left:36px;top:643px" width="18" height="18" viewBox="0 0 18 18"><path d="M0.1 1.1 H10.8 L9.6 4.5 H0.1Z" fill="#2a8ccf"/><path d="M10.6 1.5 H15.1 V4.3 H10" fill="none" stroke="#808080" stroke-width="0.95"/><path d="M8.2 6.5 H0.6 V9.4 H7.4" fill="none" stroke="#808080" stroke-width="0.95"/><path d="M9.6 6.2 H15.8 V9.7 H8.4Z" fill="#2a8ccf"/><path d="M0.1 10.9 H6.2 L5 14.7 H0.1Z" fill="#2a8ccf"/><path d="M6.5 11.3 H15.1 V14.3 H5.8" fill="none" stroke="#808080" stroke-width="0.95"/></svg>
<div class="t" style="left:55px;top:641.02px;font-size:11.5px;">Схема отметки элементов справоч...</div>
<div class="t" style="left:255px;top:641.02px;font-size:11.5px;">Все операции</div>
<div class="t" style="left:505px;top:641.02px;font-size:11.5px;">Нет</div>
<svg class="a" style="left:36px;top:663px" width="18" height="18" viewBox="0 0 18 18"><rect x="1" y="1" width="2" height="13.8" fill="#1eb05a"/><path d="M4.2 1 H9.6 V4 L11.3 2.8 L13 4 V1 H14.9 V14.8 H4.2Z" fill="#2a8ccf"/><rect x="6" y="7" width="2.7" height="1" fill="#fff"/><rect x="10.1" y="7" width="1" height="1" fill="#fff"/><rect x="12" y="7" width="1" height="1" fill="#fff"/><rect x="6" y="9" width="2.7" height="1" fill="#fff"/><rect x="10.1" y="9" width="1" height="1" fill="#fff"/><rect x="12" y="9" width="1" height="1" fill="#fff"/><rect x="6" y="11" width="2.7" height="1" fill="#fff"/><rect x="10.1" y="11" width="1" height="1" fill="#fff"/><rect x="12" y="11" width="1" height="1" fill="#fff"/></svg>
<div class="t" style="left:55px;top:661.02px;font-size:11.5px;">Составной справочник</div>
<div class="t" style="left:255px;top:661.02px;font-size:11.5px;">Все операции</div>
<div class="t" style="left:505px;top:661.02px;font-size:11.5px;">Нет</div>
<svg class="a" style="left:36px;top:683px" width="18" height="18" viewBox="0 0 18 18"><rect x="1" y="1" width="2" height="13.8" fill="#1eb05a"/><path d="M4.2 1 H9.6 V4 L11.3 2.8 L13 4 V1 H14.9 V14.8 H4.2Z" fill="#2a8ccf"/><rect x="6" y="7" width="2.7" height="1" fill="#fff"/><rect x="10.1" y="7" width="1" height="1" fill="#fff"/><rect x="12" y="7" width="1" height="1" fill="#fff"/><rect x="6" y="9" width="2.7" height="1" fill="#fff"/><rect x="10.1" y="9" width="1" height="1" fill="#fff"/><rect x="12" y="9" width="1" height="1" fill="#fff"/><rect x="6" y="11" width="2.7" height="1" fill="#fff"/><rect x="10.1" y="11" width="1" height="1" fill="#fff"/><rect x="12" y="11" width="1" height="1" fill="#fff"/></svg>
<div class="t" style="left:55px;top:681.02px;font-size:11.5px;">Составной справочник</div>
<div class="t" style="left:255px;top:681.02px;font-size:11.5px;">Все операции</div>
<div class="t" style="left:505px;top:681.02px;font-size:11.5px;">Нет</div>
</div>
<div class="a" style="left:1093px;top:100px;width:17px;height:18px;border:1px solid #dedede;border-radius:3px;background:#f2f2f2"></div>
<svg class="a" style="left:1098px;top:107px" width="7" height="4" viewBox="0 0 7 4"><path d="M0 4 H7 L3.5 0Z" fill="#8a8a8a"/></svg>
<div class="a" style="left:1098px;top:118px;width:7px;height:653px;border-left:1px solid #e0e0e0;border-right:1px solid #e0e0e0;background:#f0f0f0"></div>
<div class="a" style="left:1093px;top:119px;width:17px;height:262px;border:1px solid #dedede;border-radius:3px;background:#fff"></div>
<div class="a" style="left:1093px;top:770px;width:17px;height:18px;border:1px solid #dedede;border-radius:3px;background:#fff"></div>
<svg class="a" style="left:1098px;top:777px" width="7" height="4" viewBox="0 0 7 4"><path d="M0 0 H7 L3.5 4Z" fill="#444"/></svg>
<div class="a" style="left:2px;top:791px;width:3px;height:1px;background:#dcdcd5;"></div>
<div class="a" style="left:95px;top:791px;width:1017px;height:1px;background:#dcdcd5;"></div>
<div class="a" style="left:5px;top:791px;width:91px;height:23px;border:1px solid #dcdcdc;border-top:none;border-radius:0 0 2px 2px;background:#fff"></div>
<svg class="a" style="left:8px;top:794px" width="18" height="18" viewBox="0 0 18 18"><g fill="none" stroke="#ef4a4c" stroke-width="1.25" stroke-linejoin="round" stroke-linecap="round"><path d="M5.6 8.5 C4.8 6.5 4.8 3.5 6.5 2.7 C8 2 10.5 2 11.8 3.2 C12.6 4 12.4 6 12 8 C11.6 9.5 10.8 10.2 9.5 10.3 C8 10.4 6.2 9.8 5.6 8.5Z"/><path d="M6.4 5.6 C7.6 5.6 9 4.6 10.6 4.3"/><path d="M6.6 10.6 C4.8 11 4.2 12.5 4.5 14.2 C5 15.2 7 15.4 9 15.4 C11.5 15.3 13.1 15 13.3 13.6 C13.5 11.8 12.5 10.9 11.2 10.6"/><path d="M7.4 11 L9.4 15"/><path d="M10.5 12 V14.6"/></g></svg>
<div class="t" style="left:31px;top:794.19px;font-size:11px;">Repository</div>
<div class="a" style="left:1px;top:816px;width:1112px;height:21px;background:#278bcc;"></div>
<div class="a" style="left:87px;top:818px;width:1px;height:19px;background:#ffffff;"></div>
<div class="a" style="left:959px;top:818px;width:1px;height:19px;background:#ffffff;"></div>
<div class="a" style="left:1000px;top:818px;width:1px;height:19px;background:#ffffff;"></div>
<div class="a" style="left:1048px;top:818px;width:1px;height:19px;background:#ffffff;"></div>
<div class="a" style="left:1095px;top:818px;width:1px;height:19px;background:#ffffff;"></div>
<div class="t" style="left:12px;top:817.02px;font-size:11.5px;color:#fff;">Ожидание...</div>
<div class="t" style="left:970.5px;top:817.19px;font-size:11px;color:#8cc0e6;transform:scaleX(0.87);transform-origin:0 0;">CAP</div>
<div class="t" style="left:1012px;top:817.19px;font-size:11px;color:#fff;font-weight:bold;">NUM</div>
<div class="t" style="left:1060.5px;top:817.19px;font-size:11px;color:#8cc0e6;transform:scaleX(0.87);transform-origin:0 0;">SCRL</div>
<svg class="a" style="left:1100px;top:824px" width="13" height="13" viewBox="0 0 13 13"><path d="M12.5 2 L2 12.5 M12.5 6 L6 12.5 M12.5 10 L10 12.5" stroke="#c4bcb4" stroke-width="1"/></svg>
<div class="a" style="left:0px;top:0px;width:1114px;height:1px;background:#4b4b4b;"></div>
<div class="a" style="left:0px;top:837px;width:1114px;height:1px;background:#4b4b4b;"></div>
<div class="a" style="left:0px;top:0px;width:1px;height:838px;background:#4b4b4b;"></div>
<div class="a" style="left:1113px;top:0px;width:1px;height:838px;background:#4b4b4b;"></div>
</body></html>
